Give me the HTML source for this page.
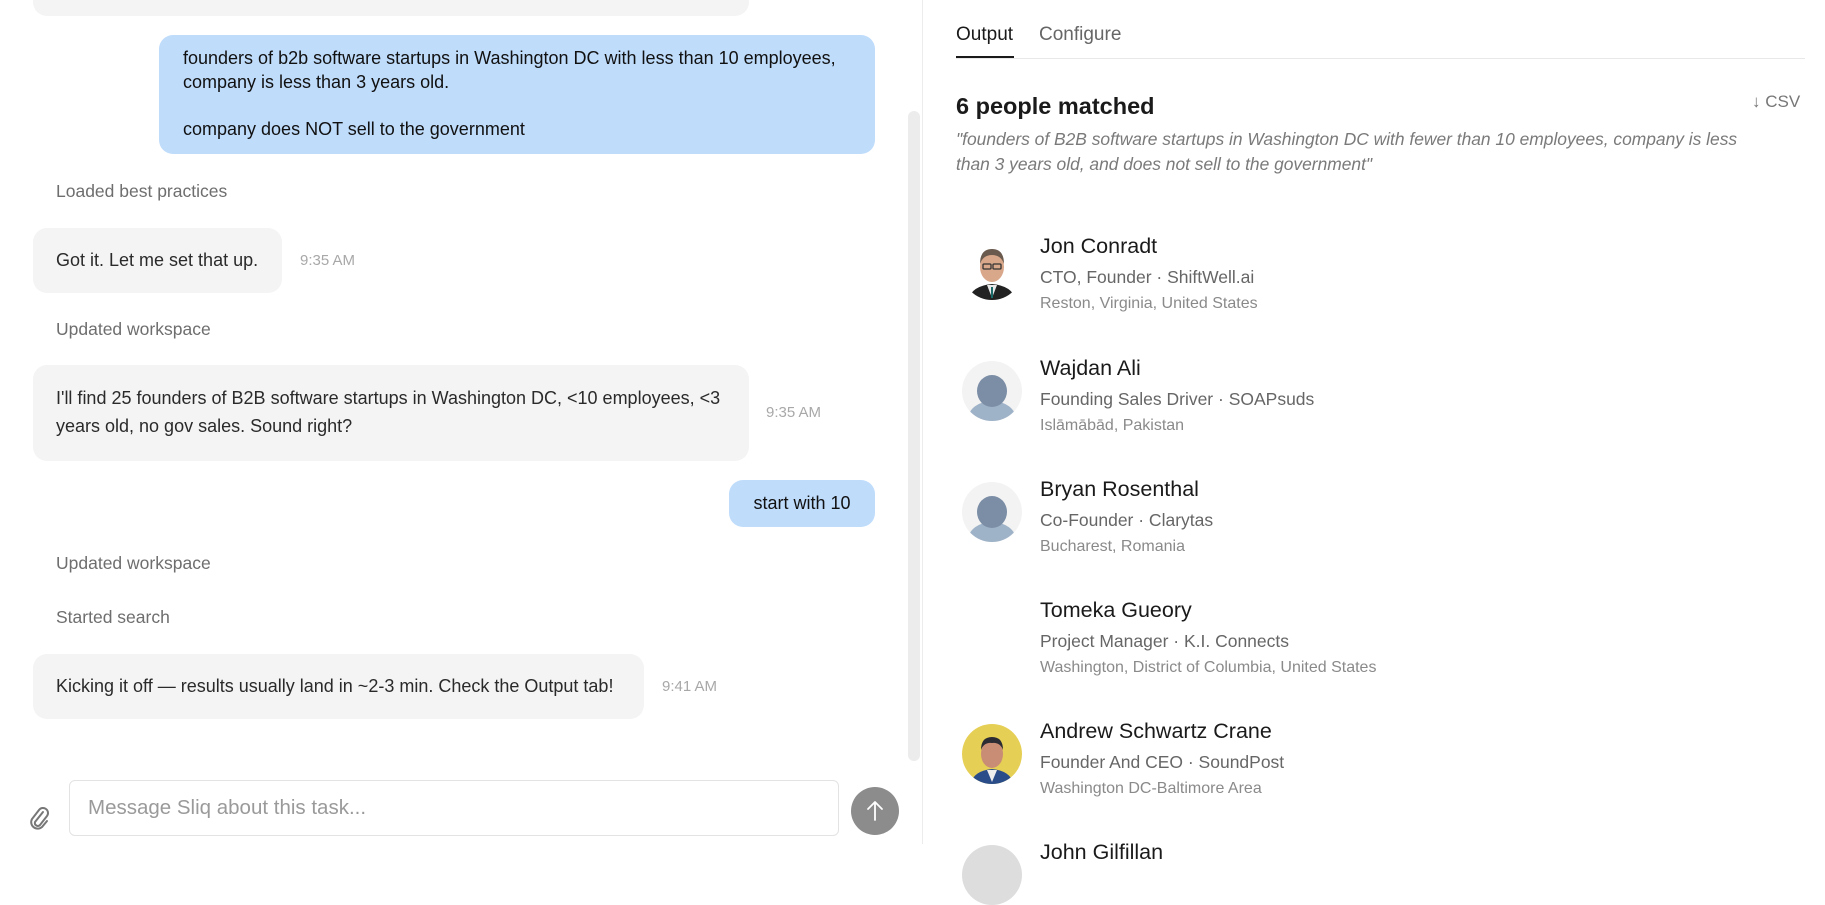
<!DOCTYPE html>
<html><head><meta charset="utf-8"><style>
*{margin:0;padding:0;box-sizing:border-box}
body{width:1825px;height:844px;overflow:hidden;background:#fff;font-family:"Liberation Sans",Arial,sans-serif;position:relative;color:#1f1f1f}
.a{position:absolute;white-space:nowrap}
.bub{position:absolute;border-radius:14px;background:#f4f4f4;font-size:18px;line-height:27px;color:#2a2a2a;white-space:nowrap}
.ub{background:#bfdcfb;color:#111}
.sys{position:absolute;font-size:17.5px;color:#6e6e6e}
.time{position:absolute;font-size:15px;color:#a8a8a8}
.name{position:absolute;font-size:21.5px;color:#1a1a1a}
.title{position:absolute;font-size:17.5px;color:#666}
.loc{position:absolute;font-size:16px;color:#8a8a8a}
.av{position:absolute;width:60px;height:60px;border-radius:50%;overflow:hidden}
</style></head><body>
<!-- left panel -->
<div class="bub" style="left:33px;top:-20px;width:716px;height:36px"></div>
<div class="bub ub" style="left:159px;top:35px;width:716px;height:119px;padding:12px 24px;line-height:23.5px">founders of b2b software startups in Washington DC with less than 10 employees,<br>company is less than 3 years old.<br><br>company does NOT sell to the government</div>
<div class="sys" style="left:56px;top:181px">Loaded best practices</div>
<div class="bub" style="left:33px;top:228px;width:249px;height:65px;padding:19px 23px">Got it. Let me set that up.</div>
<div class="time" style="left:300px;top:252px">9:35 AM</div>
<div class="sys" style="left:56px;top:319px">Updated workspace</div>
<div class="bub" style="left:33px;top:365px;width:716px;height:96px;padding:19px 23px;line-height:28px">I'll find 25 founders of B2B software startups in Washington DC, &lt;10 employees, &lt;3<br>years old, no gov sales. Sound right?</div>
<div class="time" style="left:766px;top:404px">9:35 AM</div>
<div class="bub ub" style="left:729px;top:480px;width:146px;height:47px;padding:10px 0;text-align:center">start with 10</div>
<div class="sys" style="left:56px;top:553px">Updated workspace</div>
<div class="sys" style="left:56px;top:607px">Started search</div>
<div class="bub" style="left:33px;top:654px;width:611px;height:65px;padding:19px 23px">Kicking it off — results usually land in ~2-3 min. Check the Output tab!</div>
<div class="time" style="left:662px;top:678px">9:41 AM</div>
<div class="a" style="left:908px;top:111px;width:12px;height:650px;border-radius:6px;background:#ececec"></div>
<div class="a" style="left:922px;top:0;width:1px;height:844px;background:#ececec"></div>
<!-- input -->
<svg class="a" style="left:28px;top:805px" width="22" height="26" viewBox="0 0 22 26"><path d="M15 7 L7 17 a3 3 0 0 0 5 3 L19 11 a5 5 0 0 0 -8 -6 L4 14 a6.5 6.5 0 0 0 10 8 l5 -6" fill="none" stroke="#777" stroke-width="2" stroke-linecap="round"/></svg>
<div class="a" style="left:69px;top:780px;width:770px;height:56px;border:1px solid #e3e3e3;border-radius:6px"></div>
<div class="a" style="left:88px;top:796px;font-size:20.5px;color:#9a9a9a">Message Sliq about this task...</div>
<div class="a" style="left:851px;top:787px;width:48px;height:48px;border-radius:50%;background:#8c8c8c"></div>
<svg class="a" style="left:863px;top:799px" width="24" height="24" viewBox="0 0 24 24"><path d="M12 21V3M5 10l7-7 7 7" fill="none" stroke="#fff" stroke-width="1.8" stroke-linecap="round" stroke-linejoin="round"/></svg>
<!-- right panel -->
<div class="a" style="left:956px;top:24px;font-size:19px;color:#1a1a1a">Output</div>
<div class="a" style="left:1039px;top:24px;font-size:19px;color:#666">Configure</div>
<div class="a" style="left:956px;top:58px;width:849px;height:1px;background:#e8e8e8"></div>
<div class="a" style="left:956px;top:56px;width:58px;height:2px;background:#1a1a1a"></div>
<div class="a" style="left:956px;top:93px;font-size:23.5px;font-weight:600;color:#1a1a1a">6 people matched</div>
<div class="a" style="left:1752px;top:92px;font-size:17px;color:#777">↓ CSV</div>
<div class="a" style="left:956px;top:127px;font-size:17.4px;line-height:24.5px;color:#7a7a7a;font-style:italic">"founders of B2B software startups in Washington DC with fewer than 10 employees, company is less<br>than 3 years old, and does not sell to the government"</div>

<div class="av" style="left:962px;top:240px"><svg width="60" height="60" viewBox="0 0 60 60"><rect width="60" height="60" fill="#fff"/><path d="M6 62 Q8 46 30 44 Q52 46 54 62Z" fill="#222"/><path d="M25 45 L30 58 L35 45Z" fill="#e8e8e8"/><path d="M29 47 L31 47 L31 58 L29 58Z" fill="#1b6b6b"/><ellipse cx="30" cy="27" rx="12" ry="15" fill="#d9a78a"/><path d="M18 24 Q18 9 30 9 Q42 9 42 24 Q39 15 30 15 Q21 15 18 24Z" fill="#6b5a4e"/><rect x="21" y="24" width="8" height="5" rx="1" fill="none" stroke="#333" stroke-width="1.3"/><rect x="31" y="24" width="8" height="5" rx="1" fill="none" stroke="#333" stroke-width="1.3"/></svg></div>
<div class="name" style="left:1040px;top:234px">Jon Conradt</div>
<div class="title" style="left:1040px;top:267px">CTO, Founder · ShiftWell.ai</div>
<div class="loc" style="left:1040px;top:295px">Reston, Virginia, United States</div>

<div class="av" style="left:962px;top:361px;background:#f3f3f3"><svg width="60" height="60" viewBox="0 0 60 60"><ellipse cx="30" cy="58" rx="24" ry="18" fill="#9fb3c8"/><ellipse cx="30" cy="30" rx="15" ry="16" fill="#7b8ea6"/></svg></div>
<div class="name" style="left:1040px;top:356px">Wajdan Ali</div>
<div class="title" style="left:1040px;top:389px">Founding Sales Driver · SOAPsuds</div>
<div class="loc" style="left:1040px;top:417px">Islāmābād, Pakistan</div>

<div class="av" style="left:962px;top:482px;background:#f3f3f3"><svg width="60" height="60" viewBox="0 0 60 60"><ellipse cx="30" cy="58" rx="24" ry="18" fill="#9fb3c8"/><ellipse cx="30" cy="30" rx="15" ry="16" fill="#7b8ea6"/></svg></div>
<div class="name" style="left:1040px;top:477px">Bryan Rosenthal</div>
<div class="title" style="left:1040px;top:510px">Co-Founder · Clarytas</div>
<div class="loc" style="left:1040px;top:538px">Bucharest, Romania</div>

<div class="name" style="left:1040px;top:598px">Tomeka Gueory</div>
<div class="title" style="left:1040px;top:631px">Project Manager · K.I. Connects</div>
<div class="loc" style="left:1040px;top:659px">Washington, District of Columbia, United States</div>

<div class="av" style="left:962px;top:724px;background:#e6cf55"><svg width="60" height="60" viewBox="0 0 60 60"><path d="M8 62 Q10 47 30 45 Q50 47 52 62Z" fill="#2a4d8a"/><path d="M25 46 L30 58 L35 46Z" fill="#eee"/><ellipse cx="30" cy="30" rx="11" ry="14" fill="#c98d75"/><path d="M19 26 Q19 13 30 13 Q41 13 41 26 Q38 18 30 19 Q22 18 19 26Z" fill="#2b2b33"/></svg></div>
<div class="name" style="left:1040px;top:719px">Andrew Schwartz Crane</div>
<div class="title" style="left:1040px;top:752px">Founder And CEO · SoundPost</div>
<div class="loc" style="left:1040px;top:780px">Washington DC-Baltimore Area</div>

<div class="av" style="left:962px;top:845px;background:#ddd"></div>
<div class="name" style="left:1040px;top:840px">John Gilfillan</div>
</body></html>
